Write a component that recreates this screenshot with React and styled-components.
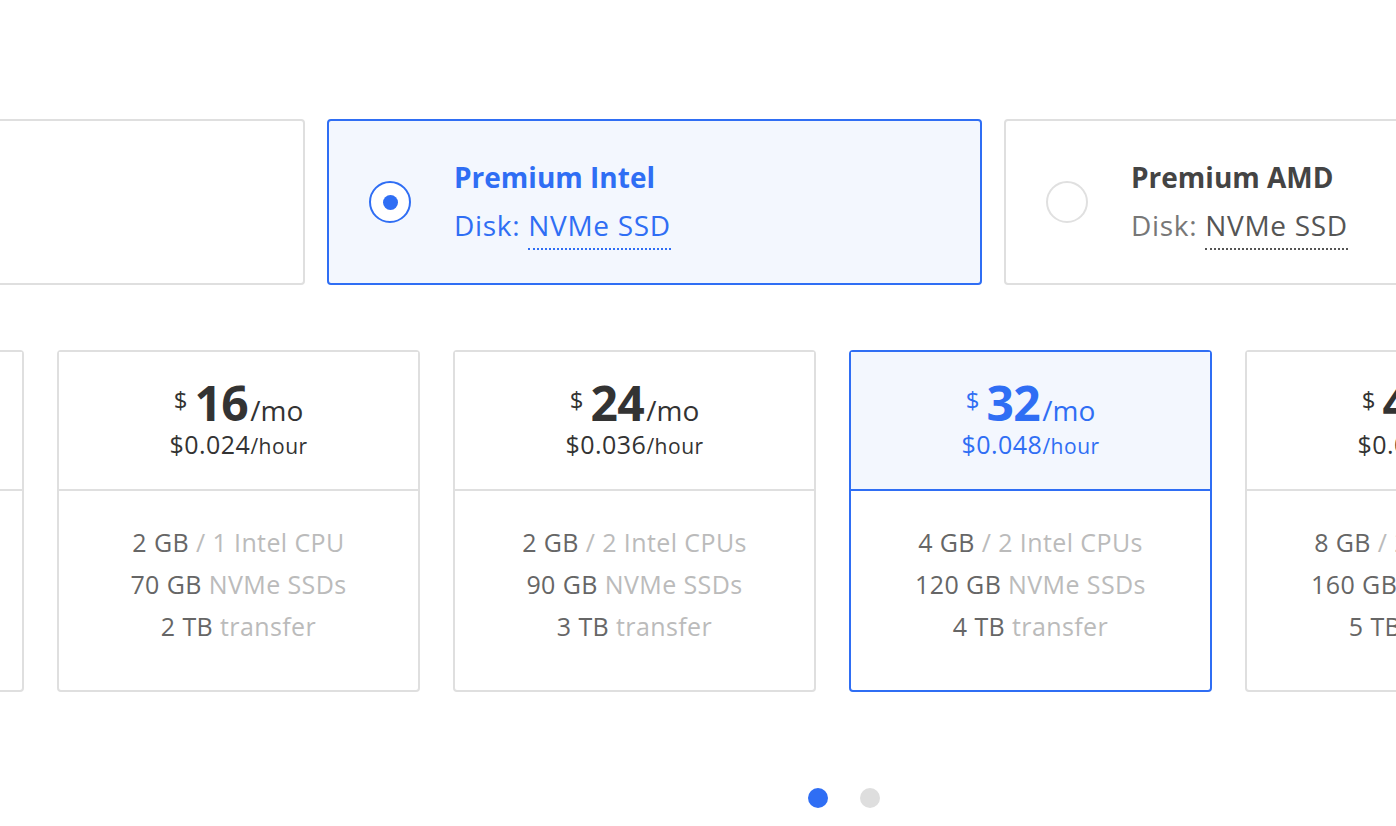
import React from "react";
import styled, { createGlobalStyle } from "styled-components";

const blue = "#2f6ef4";

const Global = createGlobalStyle`
  html, body {
    margin: 0;
    padding: 0;
    background: #fff;
    overflow: hidden;
  }
  body {
    font-family: "Open Sans", Lato, "Liberation Sans", sans-serif;
    color: #333;
  }
`;

const options = [
  { name: "Regular Intel", disk: "SSD", hidden: true },
  { name: "Premium Intel", disk: "NVMe SSD", active: true },
  { name: "Premium AMD", disk: "NVMe SSD" },
];

const plans = [
  { mo: 8, hour: "0.012", ram: "1 GB", cpu: "1 Intel CPU", disk: "35 GB", tb: "1 TB" },
  { mo: 16, hour: "0.024", ram: "2 GB", cpu: "1 Intel CPU", disk: "70 GB", tb: "2 TB" },
  { mo: 24, hour: "0.036", ram: "2 GB", cpu: "2 Intel CPUs", disk: "90 GB", tb: "3 TB" },
  { mo: 32, hour: "0.048", ram: "4 GB", cpu: "2 Intel CPUs", disk: "120 GB", tb: "4 TB", active: true },
  { mo: 48, hour: "0.071", ram: "8 GB", cpu: "2 Intel CPUs", disk: "160 GB", tb: "5 TB" },
];

const App = () => {
  return (
    <Page>
      <Global />
      <OptionTrack>
        {options.map((o) => (
          <OptionCard key={o.name} $active={o.active}>
            {!o.hidden && (
              <>
                <Radio $active={o.active} />
                <OptionText>
                  <OptionName $active={o.active}>{o.name}</OptionName>
                  <OptionDisk $active={o.active}>
                    Disk: <Dotted $active={o.active}>{o.disk}</Dotted>
                  </OptionDisk>
                </OptionText>
              </>
            )}
          </OptionCard>
        ))}
      </OptionTrack>

      <PlanTrack>
        {plans.map((p) => (
          <PlanCard key={p.mo} $active={p.active}>
            <PlanHead $active={p.active}>
              <Price>
                <Currency>$</Currency>
                <Amount>{p.mo}</Amount>
                <Per>/mo</Per>
              </Price>
              <Hourly>
                ${p.hour}
                <small>/hour</small>
              </Hourly>
            </PlanHead>
            <Specs>
              <Spec>
                {p.ram} <span>/ {p.cpu}</span>
              </Spec>
              <Spec>
                {p.disk} <span>NVMe SSDs</span>
              </Spec>
              <Spec>
                {p.tb} <span>transfer</span>
              </Spec>
            </Specs>
          </PlanCard>
        ))}
      </PlanTrack>

      <Dots>
        <Dot $active />
        <Dot />
      </Dots>
    </Page>
  );
};

const Page = styled.main`
  width: 1396px;
  height: 826px;
  overflow: hidden;
  padding-top: 119px;
  box-sizing: border-box;
`;

const OptionTrack = styled.div`
  display: flex;
  gap: 22px;
  margin-left: -350px;
`;

const OptionCard = styled.div`
  flex: 0 0 655px;
  height: 166px;
  box-sizing: border-box;
  border: 2px solid ${(p) => (p.$active ? blue : "#dfdfdf")};
  border-radius: 4px;
  background: ${(p) => (p.$active ? "#f3f7fe" : "#fff")};
  display: flex;
  align-items: center;
  padding-left: 40px;
  gap: 43px;
`;

const Radio = styled.span`
  width: 42px;
  height: 42px;
  box-sizing: border-box;
  border-radius: 50%;
  border: 2px solid ${(p) => (p.$active ? blue : "#e0e0e0")};
  background: #fff;
  display: flex;
  align-items: center;
  justify-content: center;
  &::after {
    content: "";
    width: 15px;
    height: 15px;
    border-radius: 50%;
    background: ${(p) => (p.$active ? blue : "transparent")};
  }
`;

const OptionText = styled.div`
  display: flex;
  flex-direction: column;
  margin-top: -3px;
`;

const OptionName = styled.div`
  font-size: 28px;
  line-height: 48px;
  font-weight: 700;
  color: ${(p) => (p.$active ? blue : "#444")};
`;

const OptionDisk = styled.div`
  font-size: 28px;
  line-height: 48px;
  letter-spacing: 0.7px;
  color: ${(p) => (p.$active ? blue : "#777")};
`;

const Dotted = styled.span`
  color: ${(p) => (p.$active ? blue : "#555")};
  padding-bottom: 4px;
  border-bottom: 2px dotted ${(p) => (p.$active ? blue : "#555")};
`;

const PlanTrack = styled.div`
  display: flex;
  gap: 33px;
  margin-left: -339px;
  margin-top: 65px;
`;

const PlanCard = styled.div`
  flex: 0 0 363px;
  height: 342px;
  box-sizing: border-box;
  border: 2px solid ${(p) => (p.$active ? blue : "#dfdfdf")};
  border-radius: 4px;
  display: flex;
  flex-direction: column;
  color: ${(p) => (p.$active ? blue : "#333")};
`;

const PlanHead = styled.div`
  height: 139px;
  box-sizing: border-box;
  border-bottom: 2px solid ${(p) => (p.$active ? blue : "#dfdfdf")};
  background: ${(p) => (p.$active ? "#f3f7fe" : "#fff")};
  display: flex;
  flex-direction: column;
  align-items: center;
  padding-top: 25px;
`;

const Price = styled.div`
  display: flex;
  align-items: baseline;
  height: 52px;
`;

const Currency = styled.span`
  font-size: 24px;
  line-height: 24px;
  align-self: flex-start;
  margin-top: 11px;
  margin-right: 7px;
`;

const Amount = styled.span`
  font-size: 48px;
  line-height: 52px;
  font-weight: 700;
  letter-spacing: -0.5px;
  margin-right: 2px;
`;

const Per = styled.span`
  font-size: 28px;
  line-height: 28px;
`;

const Hourly = styled.div`
  font-size: 25px;
  letter-spacing: 0.5px;
  line-height: 30px;
  small {
    font-size: 21px;
  }
`;

const Specs = styled.div`
  display: flex;
  flex-direction: column;
  align-items: center;
  padding-top: 30px;
`;

const Spec = styled.div`
  font-size: 25px;
  line-height: 42px;
  letter-spacing: 0.4px;
  color: #666;
  span {
    color: #bbb;
  }
`;

const Dots = styled.div`
  display: flex;
  justify-content: center;
  gap: 32px;
  margin-top: 96px;
  padding-left: 292px;
`;

const Dot = styled.span`
  width: 20px;
  height: 20px;
  border-radius: 50%;
  background: ${(p) => (p.$active ? blue : "#dedede")};
`;

export default App;
